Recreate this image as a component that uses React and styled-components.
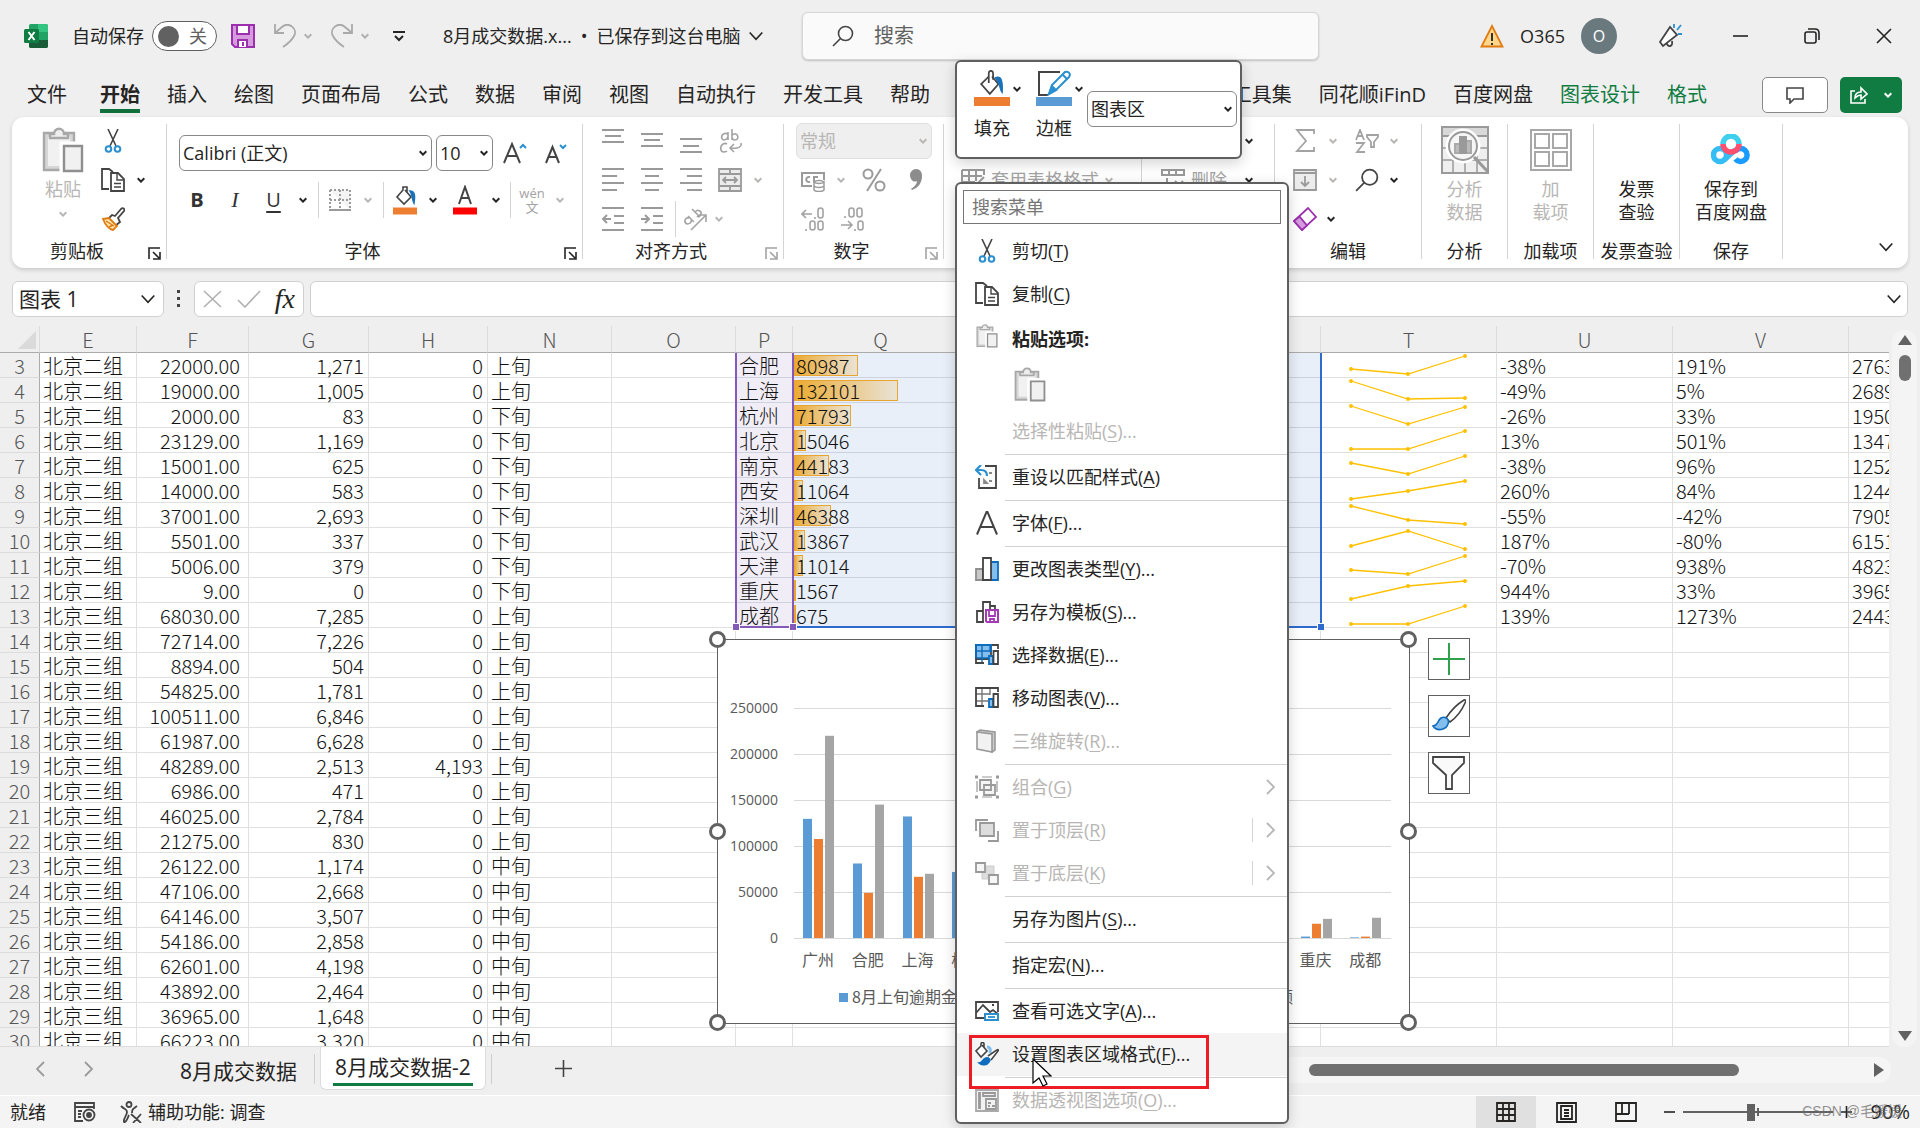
import styled, { createGlobalStyle, css } from 'styled-components';

const uiFont = '"Open Sans", "Noto Sans CJK SC", sans-serif';
const cellFont = '"Noto Sans CJK SC", "Open Sans", sans-serif';

const ink = '#252423';
const dim = '#b8b6b4';
const green = '#107c41';

const GlobalStyle = createGlobalStyle`
    * {
        box-sizing: border-box;
    }
    body {
        margin: 0;
        overflow: hidden;
        background: #efefef;
    }
    button, input, select {
        margin: 0;
        padding: 0;
        border: none;
        background: none;
        color: inherit;
        font: inherit;
    }
    svg {
        display: block;
        flex: none;
    }
`;

/* ---------- data ---------- */

const leftTabs = ['文件', '开始', '插入', '绘图', '页面布局', '公式', '数据', '审阅', '视图', '自动执行', '开发工具', '帮助'];
const rightTabs = ['工具集', '同花顺iFinD', '百度网盘', '图表设计', '格式'];

const columns = [
    ['E', 97], ['F', 112], ['G', 120], ['H', 119], ['N', 124], ['O', 124], ['P', 57],
    ['Q', 176], ['R', 176], ['S', 176], ['T', 176], ['U', 176], ['V', 176], ['W', 176],
];

const rows = [
    ['二', '22000.00', '1,271', '0', '上'],
    ['二', '19000.00', '1,005', '0', '上'],
    ['二', '2000.00', '83', '0', '下'],
    ['二', '23129.00', '1,169', '0', '下'],
    ['二', '15001.00', '625', '0', '下'],
    ['二', '14000.00', '583', '0', '下'],
    ['二', '37001.00', '2,693', '0', '下'],
    ['二', '5501.00', '337', '0', '下'],
    ['二', '5006.00', '379', '0', '下'],
    ['二', '9.00', '0', '0', '下'],
    ['三', '68030.00', '7,285', '0', '上'],
    ['三', '72714.00', '7,226', '0', '上'],
    ['三', '8894.00', '504', '0', '上'],
    ['三', '54825.00', '1,781', '0', '上'],
    ['三', '100511.00', '6,846', '0', '上'],
    ['三', '61987.00', '6,628', '0', '上'],
    ['三', '48289.00', '2,513', '4,193', '上'],
    ['三', '6986.00', '471', '0', '上'],
    ['三', '46025.00', '2,784', '0', '上'],
    ['三', '21275.00', '830', '0', '上'],
    ['三', '26122.00', '1,174', '0', '中'],
    ['三', '47106.00', '2,668', '0', '中'],
    ['三', '64146.00', '3,507', '0', '中'],
    ['三', '54186.00', '2,858', '0', '中'],
    ['三', '62601.00', '4,198', '0', '中'],
    ['三', '43892.00', '2,464', '0', '中'],
    ['三', '36965.00', '1,648', '0', '中'],
    ['三', '66223.00', '3,320', '0', '中'],
];

const cities = [
    { name: '合肥', total: 80987, u: '-38%', v: '191%', w: '2763', line: [16, 21, 3] },
    { name: '上海', total: 132101, u: '-49%', v: '5%', w: '2689', line: [3, 21, 20] },
    { name: '杭州', total: 71793, u: '-26%', v: '33%', w: '1950', line: [3, 21, 4] },
    { name: '北京', total: 15046, u: '13%', v: '501%', w: '1347', line: [21, 21, 3] },
    { name: '南京', total: 44183, u: '-38%', v: '96%', w: '1252', line: [10, 21, 3] },
    { name: '西安', total: 11064, u: '260%', v: '84%', w: '1244', line: [21, 13, 3] },
    { name: '深圳', total: 46388, u: '-55%', v: '-42%', w: '7905', line: [3, 17, 21] },
    { name: '武汉', total: 13867, u: '187%', v: '-80%', w: '6151', line: [18, 3, 21] },
    { name: '天津', total: 11014, u: '-70%', v: '938%', w: '4823', line: [17, 21, 3] },
    { name: '重庆', total: 1567, u: '944%', v: '33%', w: '3965', line: [21, 8, 3] },
    { name: '成都', total: 675, u: '139%', v: '1273%', w: '2443', line: [21, 21, 3] },
];

const chartData = [
    ['广州', 129500, 107600, 219800],
    ['合肥', 80987, 49000, 145000],
    ['上海', 132101, 66500, 69800],
    ['杭州', 71793, 53000, 70800],
    ['北京', 15046, 17000, 102000],
    ['南京', 44183, 27400, 53700],
    ['西安', 11064, 39800, 73300],
    ['深圳', 46388, 20900, 12100],
    ['武汉', 13867, 39800, 8000],
    ['天津', 11014, 3300, 34300],
    ['重庆', 1567, 15500, 20800],
    ['成都', 675, 1500, 22000],
];
const seriesColors = ['#5b9bd5', '#ed7d31', '#a5a5a5'];
const legend = ['8月上旬逾期金额', '8月中旬逾期金额', '8月下旬逾期金额'];

const menu = [
    { icon: 'cut', text: '剪切', k: 'T' },
    { icon: 'copy', text: '复制', k: 'C' },
    { icon: 'paste', heading: '粘贴选项:' },
    { text: '选择性粘贴', k: 'S', dots: true, off: true },
    { sep: true },
    { icon: 'reset', text: '重设以匹配样式', k: 'A' },
    { sep: true },
    { icon: 'font', text: '字体', k: 'F', dots: true },
    { sep: true },
    { icon: 'chartType', text: '更改图表类型', k: 'Y', dots: true },
    { icon: 'template', text: '另存为模板', k: 'S', dots: true },
    { icon: 'selectData', text: '选择数据', k: 'E', dots: true },
    { icon: 'moveChart', text: '移动图表', k: 'V', dots: true },
    { icon: 'rotate', text: '三维旋转', k: 'R', dots: true, off: true },
    { sep: true },
    { icon: 'group', text: '组合', k: 'G', off: true, sub: true },
    { icon: 'front', text: '置于顶层', k: 'R', off: true, sub: true, split: true },
    { icon: 'back', text: '置于底层', k: 'K', off: true, sub: true, split: true },
    { sep: true },
    { text: '另存为图片', k: 'S', dots: true },
    { sep: true },
    { text: '指定宏', k: 'N', dots: true },
    { sep: true },
    { icon: 'altText', text: '查看可选文字', k: 'A', dots: true },
    { icon: 'format', text: '设置图表区域格式', k: 'F', dots: true, hover: true },
    { sep: true },
    { icon: 'pivot', text: '数据透视图选项', k: 'O', dots: true, off: true },
];

/* ---------- icons ---------- */

const Svg = ({ w = 24, h = w, box, sw = 2, color = '#444', children }) => (
    <svg
        width={w}
        height={h}
        viewBox={box || `0 0 ${w} ${h}`}
        fill="none"
        stroke={color}
        strokeWidth={sw}
        aria-hidden="true"
    >
        {children}
    </svg>
);

const Caret = ({ color = ink }) => (
    <Svg w={8} h={6} color={color}>
        <path d="M.7 1.2 4 4.6l3.3-3.4" />
    </Svg>
);

const BigCaret = () => (
    <Svg w={14} h={10} sw={1.6} color={ink}>
        <path d="M.7 1.5 7 8.3l6.300-6.800" />
    </Svg>
);

const LinesIcon = ({ lines, children }) => (
    <Svg color="#9a9a9a" w={24}>
        {lines.map(([y, x1, x2]) => <path key={y} d={`M${x1} ${y}H${x2}`} />)}
        {children}
    </Svg>
);

const PasteIcon = ({ w = 24, h = 24 }) => (
    <Svg w={w} h={h} box="0 0 42 46" sw={2.4} color="#a8a8a8">
        <path d="M2 6h30v37H2z" fill="#d6d6d6" />
        <path d="M6 10h22v29H6z" fill="#f1f1f1" stroke="none" />
        <path d="M8 11V7h4c0-7 10-7 10 0h4v4z" fill="#eee" />
        <path d="M20 17h21v28H20z" fill="#fff" stroke="#fff" strokeWidth="5" />
        <path d="M22 19h18v25H22z" fill="#f1f1f1" stroke="#8f8f8f" />
    </Svg>
);

const CutIcon = () => (
    <Svg sw={1.6}>
        <path d="M7 0l8 17M17 0L9 17" />
        <circle cx="7.5" cy="20" r="2.8" stroke="#2b8fd0" strokeWidth="2" />
        <circle cx="16.5" cy="20" r="2.8" stroke="#2b8fd0" strokeWidth="2" />
    </Svg>
);

const CopyIcon = () => (
    <Svg sw={1.8}>
        <path d="M8 21H1V1h7l4 3" fill="#fff" />
        <path d="M10 5h7l6 6v12H10z" fill="#fff" />
        <path d="M16 5v7h7M13 15.500h7M13 19h7" strokeWidth="1.4" />
    </Svg>
);

const BucketIcon = ({ w = 24 }) => (
    <Svg w={w} box="0 0 24 24" sw={1.6}>
        <path d="M12 6l6 7-8 9-8-9 7-7" fill="#fff" />
        <path d="M9 12V3c0-3 4-3 4 0v6" />
        <path d="M15 7c6-2 7 3 6.500 14-2-2-2-5-3-8-1-2-2-4-3.500-6z" fill="#1a72b8" stroke="#1a72b8" strokeWidth="1" />
    </Svg>
);

const BrushIcon = () => (
    <Svg sw={1.8}>
        <path d="M14 9l6-7c2-2 4 0 3 2l-6 7 2 4-5 4-7-7 4-4z" fill="#fff" />
        <path d="M2 12l6-1 8 8-4 4C7 22 4 17 2 12z" fill="#ffe2ae" stroke="#e07b12" />
        <path d="M5 14l8 5M8 20l4-2" stroke="#e07b12" strokeWidth="1.4" />
    </Svg>
);

const FloppyIcon = () => (
    <Svg color="#9b2fae">
        <path d="M1 1h22v22H4l-3-3z" fill="#d69ade" />
        <path d="M6 1h12v9H6zM7 23v-7h9v7" fill="#fff" />
        <path d="M12 18v4" />
    </Svg>
);

const ExcelIcon = () => (
    <Svg w={24} sw={0}>
        <rect x="5" width="19" height="24" rx="1.5" fill="#21a366" />
        <path d="M14 0h8.500L24 1.500V8H14z" fill="#33c481" />
        <path d="M5 8h9v8H5z" fill="#107c41" />
        <path d="M14 16h10v6.500L22.500 24H6.500L5 22.500V16z" fill="#185c37" />
        <rect y="5" width="15" height="14" rx="1.5" fill="#107c41" />
        <path d="M4.500 8l6 8M10.500 8l-6 8" stroke="#fff" strokeWidth="2" />
    </Svg>
);

const UndoIcon = ({ flip }) => (
    <Svg w={22} h={24} color="#a9a9a9" sw={1.8}>
        <g transform={flip ? 'translate(22 0) scale(-1 1)' : undefined}>
            <path d="M1 0v9h9M1.500 8.500L8 3c7-6 16 2 12 9-1 2-5 7-11 11" />
        </g>
    </Svg>
);

const SearchIcon = ({ w = 22 }) => (
    <Svg w={w} box="0 0 22 22" sw={1.6}>
        <circle cx="13.5" cy="8.5" r="7" />
        <path d="M8.500 13.500L1 21" />
    </Svg>
);

const SheetIcon = ({ blue }) => (
    <Svg sw={1.8}>
        {blue && <path d="M1 2h15v14H1z" fill="#83beec" />}
        <path d="M1 8h14M1 15h12M7 2v18M15 2v7" stroke={blue ? '#0f6cbd' : '#777'} strokeWidth="1.4" />
        <path d="M23 6V2H1v18h8" />
        {blue && <path d="M1 15V2h15v7" stroke="#0f6cbd" />}
        <path d="M14 13h4v8h-4z" fill="#83beec" stroke="#0f6cbd" />
        <path d="M18.500 8H23v13h-4.500z" fill="#fff" />
    </Svg>
);

const icons = {
    cut: <CutIcon />,
    copy: <CopyIcon />,
    paste: <PasteIcon />,
    reset: (
        <Svg sw={1.8}>
            <path d="M10 1h12v22H4V12" fill="#fafafa" stroke="none" />
            <path d="M10 1h11v22H4V13" />
            <path d="M14 8h3M14 16h3M9 15v3h3z" stroke="#888" />
            <path d="M6 0L1 5l5 5M1 5h5c4 0 6 2 6 6" stroke="#2b8fd0" strokeWidth="2.2" />
        </Svg>
    ),
    font: <Svg><path d="M2 23.500L11.500 1h1L22 23.500M5.500 16h13" /></Svg>,
    chartType: (
        <Svg sw={1.8}>
            <path d="M1 12h7v11H1z" fill="#c8c8c8" stroke="#8f8f8f" />
            <path d="M16 5h7v18h-7z" fill="#83beec" stroke="#0f6cbd" />
            <path d="M8 1h8v22H8z" fill="#fff" />
        </Svg>
    ),
    template: (
        <Svg sw={1.8}>
            <path d="M9 22H2V11h6M8 22V2h7v7M15 6h5v3" />
            <path d="M11 10h12v12H12l-1-1z" fill="#fff" stroke="#a43bb5" strokeWidth="2" />
            <path d="M14 10v6h6v-6M15 22v-3h4v3" stroke="#a43bb5" />
        </Svg>
    ),
    selectData: <SheetIcon blue />,
    moveChart: <SheetIcon />,
    rotate: (
        <Svg color="#999" sw={1.6}>
            <path d="M2 3l3-2 15 2v18l-3 2z" fill="#ccc" />
            <path d="M2 3l15 2v18L2 20z" fill="#f2f2f2" />
        </Svg>
    ),
    group: (
        <Svg color="#999" sw={1.8}>
            <path d="M5 5h11v10H5zM9 10h11v10H9z" fill="#eee" fillOpacity=".6" />
            <path d="M0 2h3M21 2h3M0 22h3M21 22h3" strokeWidth="3" />
            <path d="M7 2h10M7 22h10M2 6v11M22 6v11" strokeWidth="1.2" />
        </Svg>
    ),
    front: (
        <Svg color="#999" sw={1.8}>
            <path d="M12 3V2H1v10h1M23 13v10H13" />
            <path d="M5 5h14v13H5z" fill="#ddd" />
        </Svg>
    ),
    back: (
        <Svg color="#999" sw={1.8}>
            <path d="M11 5h8v8h-6v5H7v-7h4z" fill="#ddd" stroke="#ccc" strokeWidth="1" />
            <path d="M1 2h9v9H1zM14 14h9v9h-9z" fill="#f6f6f6" />
        </Svg>
    ),
    altText: (
        <Svg sw={1.8}>
            <path d="M9 19H1V3h22v10" />
            <path d="M1 14l7-8 7 7 3-2 5 4M17 6h2" />
            <path d="M10 15h13v6H10z" fill="#fff" stroke="#2b8fd0" strokeWidth="2" />
            <path d="M13 18h7" stroke="#2b8fd0" />
        </Svg>
    ),
    format: (
        <Svg sw={1.6}>
            <path d="M7 3l5 6-6 6-5-6 5-5V2c0-2 3-2 3 0v4" fill="#fff" />
            <path d="M12 5c3 0 4 2 3 6" stroke="#83beec" strokeWidth="3" />
            <path d="M13 14L22 8c1-1 2 0 1 1l-7 9" fill="#fff" />
            <path d="M4 21c4 0 3-4 7-5 3-.500 5 2 3 4-2 3-7 4-10 1z" fill="#0f6cbd" stroke="#0f6cbd" />
        </Svg>
    ),
    pivot: (
        <Svg color="#999" sw={1.8}>
            <path d="M1 2h22v21H1z" fill="#f1f1f1" stroke="#aaa" />
            <path d="M8 5h12v3H8zM4 5h1v15H4zM11 11h10v10H11z" />
            <path d="M13 15h3M17 18h3M13 18h2" />
        </Svg>
    ),
};

/* ---------- shell ---------- */

const Window = styled.div`
    position: relative;
    display: flex;
    flex-direction: column;
    height: 100vh;
    overflow: hidden;
    background: #efefef;
    color: ${ink};
    font: 18px/24px ${uiFont};
    white-space: nowrap;
`;

const TitleBar = styled.header`
    display: grid;
    grid-template-columns: 802fr 517fr 601fr;
    align-items: center;
    height: 72px;
`;

const TitleGroup = styled.div`
    display: flex;
    align-items: center;
    gap: ${({ $gap }) => $gap}px;
    padding-left: ${({ $pad }) => $pad || 0}px;
    padding-right: ${({ $end }) => $end || 0}px;
    justify-content: ${({ $end }) => ($end ? 'flex-end' : 'flex-start')};
`;

const Toggle = styled.label`
    display: flex;
    align-items: center;
    justify-content: space-between;
    width: 65px;
    height: 30px;
    padding: 0 9px 0 5px;
    border: 1px solid #616161;
    border-radius: 15px;
    background: #fff;
    color: #616161;
    input {
        width: 21px;
        height: 21px;
        border-radius: 50%;
        appearance: none;
        background: #616161;
    }
`;

const PlainButton = styled.button`
    display: flex;
    align-items: center;
    gap: 8px;
    white-space: nowrap;
`;

const SearchBox = styled.label`
    display: flex;
    align-items: center;
    gap: 20px;
    height: 48px;
    padding-left: 29px;
    border: 1px solid #d6d6d6;
    border-radius: 6px;
    background: #fafafa;
    box-shadow: 0 1px 2px rgba(0, 0, 0, .2);
    font-size: 20px;
    input {
        flex: 1;
        outline: none;
    }
    input::placeholder {
        color: #616161;
    }
`;

const Avatar = styled.button`
    width: 36px;
    height: 36px;
    border-radius: 50%;
    background: #69797e;
    color: #fff;
    font-size: 16px;
`;

const WindowControls = styled.div`
    display: flex;
    gap: 56px;
    margin-left: 10px;
    align-items: center;
`;

const TabBar = styled.nav`
    display: flex;
    align-items: center;
    height: 45px;
    padding: 0 18px 0 27px;
    font-size: 20px;
`;

const Tab = styled.button`
    height: 36px;
    margin-right: 27px;
    padding-top: 4px;
    border-bottom: 4px solid ${({ $active }) => ($active ? '#0f703b' : 'transparent')};
    color: ${({ $accent }) => ($accent ? green : ink)};
    font-weight: ${({ $active }) => ($active ? 700 : 400)};
    line-height: 24px;
    white-space: nowrap;
    &:first-child {
        margin-right: 33px;
    }
`;

const TabSpace = styled.div`
    flex: 1;
`;

const CommentButton = styled.button`
    display: flex;
    align-items: center;
    justify-content: center;
    width: 66px;
    height: 36px;
    margin: 0 12px 0 28px;
    border: 1px solid #8a8886;
    border-radius: 5px;
    background: #fff;
`;

const ShareButton = styled.button`
    display: flex;
    align-items: center;
    justify-content: center;
    gap: 16px;
    width: 62px;
    height: 36px;
    border-radius: 5px;
    background: ${green};
`;

/* ---------- ribbon ---------- */

const RibbonCard = styled.section`
    display: flex;
    height: 151px;
    margin: 0 12px;
    border-radius: 12px;
    background: #fff;
    box-shadow: 0 2px 4px rgba(0, 0, 0, .16);
`;

const GroupBox = styled.div`
    display: flex;
    flex: none;
    flex-direction: column;
    width: ${({ $w }) => $w}px;
    padding-top: 4px;
`;

const GroupLine = styled.div`
    width: 1px;
    height: 135px;
    margin-top: 7px;
    background: #d4d4d4;
`;

const GroupBody = styled.div`
    height: 117px;
    padding-left: ${({ $pad }) => $pad || 0}px;
`;

const GroupFoot = styled.div`
    display: flex;
    align-items: center;
    height: 26px;
    text-align: center;
    span {
        flex: 1;
    }
`;

const Launcher = styled.button`
    display: flex;
    width: 24px;
    padding: 4px 0 0 6px;
`;

const ToolRow = styled.div`
    display: flex;
    align-items: center;
    height: ${({ $h }) => $h || 39}px;
    justify-content: ${({ $end }) => ($end ? 'flex-end' : 'flex-start')};
    padding-right: ${({ $end }) => $end || 0}px;
`;

const Tool = styled.button`
    display: flex;
    align-items: center;
    justify-content: center;
    width: ${({ $w }) => $w || 34}px;
    height: 28px;
    color: ${({ disabled }) => (disabled ? '#a3a3a3' : '#333')};
`;

const Letter = styled.span`
    font-size: ${({ $size }) => $size || 20}px;
    font-weight: ${({ $bold }) => ($bold ? 700 : 400)};
    font-style: ${({ $italic }) => ($italic ? 'italic' : 'normal')};
    font-family: ${({ $serif }) => ($serif ? '"Liberation Serif", serif' : uiFont)};
    text-decoration: ${({ $under }) => ($under ? 'underline' : 'none')};
    text-underline-offset: 4px;
    line-height: 24px;
`;

const Pinyin = styled.span`
    font-size: 13px;
    line-height: 14px;
`;

const ToolLine = styled.div`
    width: 1px;
    height: 36px;
    margin: 0 4px;
    background: #d4d4d4;
`;

const SelectShell = styled.label`
    display: grid;
    align-items: center;
    width: ${({ $w }) => $w}px;
    height: 36px;
    margin-right: 4px;
    border: 1px solid ${({ $off }) => ($off ? '#e0e0e0' : '#8a8886')};
    border-radius: 6px;
    background: ${({ $off }) => ($off ? '#efefef' : '#fff')};
    color: ${({ $off }) => ($off ? dim : ink)};
    > * {
        grid-area: 1 / 1;
    }
    select {
        height: 100%;
        padding-left: 3px;
        opacity: 1;
        outline: none;
        appearance: none;
    }
    svg {
        justify-self: end;
        margin-right: 4px;
        pointer-events: none;
    }
`;

const ClipLayout = styled.div`
    display: grid;
    grid-template-columns: 54px 56px;
`;

const BigTool = styled.button`
    display: flex;
    flex-direction: column;
    align-items: center;
    width: 100%;
    padding-top: 5px;
    color: ${({ disabled }) => (disabled ? dim : ink)};
    line-height: 23px;
    > div {
        display: grid;
        place-items: center;
        height: 48px;
        margin-bottom: 4px;
    }
    > svg {
        margin-top: 10px;
    }
`;

const RibbonEnd = styled.div`
    display: flex;
    flex: 1;
    align-items: flex-end;
    justify-content: flex-end;
    padding: 0 15px 16px 0;
`;

/* ---------- formula bar ---------- */

const FormulaBar = styled.div`
    display: flex;
    align-items: center;
    height: 58px;
    padding: 3px 12px 0;
`;

const NameBox = styled.label`
    display: flex;
    align-items: center;
    width: 152px;
    height: 36px;
    padding: 0 8px 0 6px;
    border: 1px solid #d0d0d0;
    border-radius: 6px;
    background: #fff;
    font-size: 21px;
    input {
        width: 100%;
        outline: none;
    }
`;

const FormulaTools = styled.div`
    display: flex;
    align-items: center;
    justify-content: space-between;
    width: 110px;
    height: 36px;
    padding: 0 8px;
    border: 1px solid #d0d0d0;
    border-radius: 6px;
    background: #fff;
`;

const Dots = styled.div`
    display: grid;
    place-items: center;
    width: 30px;
`;

const FormulaInput = styled.label`
    display: flex;
    flex: 1;
    align-items: center;
    height: 36px;
    margin-left: 6px;
    padding: 0 6px;
    border: 1px solid #d0d0d0;
    border-radius: 6px;
    background: #fff;
    input {
        flex: 1;
        outline: none;
    }
`;

/* ---------- sheet ---------- */

const SheetArea = styled.main`
    display: flex;
    flex: 1;
    min-height: 0;
`;

const Canvas = styled.div`
    position: relative;
    flex: 1;
    min-width: 0;
    overflow: hidden;
    border-bottom: 1px solid #dcdcdc;
    background: #fff;
`;

const Grid = styled.table`
    width: 2025px;
    border-collapse: separate;
    border-spacing: 0;
    table-layout: fixed;
    font: 20px/22px ${cellFont};
    color: #111;
    th {
        padding: 0;
        background: #efefef;
        color: #555;
        font-weight: 300;
        text-align: center;
    }
    thead th {
        height: 27px;
        padding-top: 2px;
        border-right: 1px solid #dcdcdc;
        border-bottom: 1px solid #ababab;
    }
    tbody th {
        height: 25px;
        padding-top: 2px;
        border-right: 1px solid #ababab;
        border-bottom: 1px solid #dcdcdc;
    }
`;

const Corner = styled.th`
    svg {
        margin: 0 3px 0 auto;
    }
`;

const Cell = styled.td`
    height: 25px;
    padding: ${({ $spark }) => ($spark ? 0 : '2px 4px 0 3px')};
    padding-right: ${({ $wide }) => ($wide ? 8 : 4)}px;
    border-right: 1px solid ${({ $fill }) => ($fill ? 'transparent' : '#e0e0e0')};
    border-bottom: 1px solid ${({ $fill }) => ($fill ? '#cdd2de' : '#e0e0e0')};
    background: ${({ $fill }) => $fill || '#fff'};
    background-clip: padding-box;
    font-weight: 300;
    text-align: ${({ $right }) => ($right ? 'right' : 'left')};
`;

const BarCell = styled(Cell)`
    padding: 0;
`;

const BarStack = styled.div`
    display: grid;
    align-items: center;
    height: 24px;
    padding-left: 1px;
    > * {
        grid-area: 1 / 1;
    }
    span {
        padding: 2px 0 0 2px;
    }
`;

const Bar = styled.div`
    height: 21px;
    border: 1px solid #e8a530;
    background: linear-gradient(90deg, #ecab33, #e9e3d6);
`;

const RangeFrame = styled.div`
    position: absolute;
    top: 27px;
    left: ${({ $left }) => $left}px;
    width: ${({ $w }) => $w}px;
    height: 275px;
    border: solid ${({ $color }) => $color};
    border-width: 0 2px 2px ${({ $open }) => ($open ? 0 : 2)}px;
`;

const RangeKnob = styled.div`
    position: absolute;
    top: 298px;
    left: ${({ $left }) => $left}px;
    width: 6px;
    height: 6px;
    background: ${({ $color }) => $color};
    outline: 1px solid #fff;
`;

const ChartBox = styled.figure`
    position: absolute;
    top: 313px;
    left: 717px;
    width: 693px;
    height: 385px;
    margin: 0;
    border: 1px solid #616161;
    background: #fff;
    text {
        fill: #595959;
        stroke: none;
        font: 14px "Open Sans", "Noto Sans CJK SC", sans-serif;
    }
    text.cn {
        font: 16px "Noto Sans CJK SC", sans-serif;
    }
`;

const ChartKnob = styled.div`
    position: absolute;
    top: ${({ $y }) => $y};
    left: ${({ $x }) => $x};
    width: 17px;
    height: 17px;
    margin: -9px;
    border: 3px solid #616161;
    border-radius: 50%;
    background: #fff;
`;

const ChartSide = styled.div`
    position: absolute;
    top: 312px;
    left: 1428px;
    display: flex;
    flex-direction: column;
    gap: 15px;
`;

const SideButton = styled.button`
    display: grid;
    place-items: center;
    width: 42px;
    height: 42px;
    border: 1px solid #616161;
    background: #fff;
`;

const VScroll = styled.div`
    display: flex;
    flex-direction: column;
    align-items: center;
    width: 25px;
    margin: 4px 3px 0;
    padding: 5px 0 6px;
    border-radius: 12px;
    background: #f4f4f4;
`;

const VThumb = styled.div`
    width: 12px;
    height: 26px;
    margin: 10px 0 auto;
    border-radius: 6px;
    background: #707070;
`;

/* ---------- bottom bars ---------- */

const SheetTabs = styled.nav`
    display: flex;
    align-items: center;
    height: 48px;
    padding-bottom: 5px;
    font-size: 21px;
`;

const NavArrow = styled.button`
    width: 48px;
    display: grid;
    place-items: center;
`;

const SheetTab = styled.button`
    height: 43px;
    white-space: nowrap;
    ${({ $active }) => $active ? css`
        padding: 0 12px;
        border: 1px solid #dcdcdc;
        border-top: none;
        border-radius: 0 0 6px 6px;
        background: #fff;
        span {
            display: block;
            padding: 0 2px;
            border-bottom: 3px solid ${green};
            line-height: 32px;
        }
    ` : css`
        margin-left: 68px;
        padding: 4px 12px 0 0;
    `}
`;

const TabLine = styled.div`
    width: 1px;
    height: 30px;
    margin: 0 5px;
    background: #cfcfcf;
`;

const HScroll = styled.div`
    display: flex;
    align-items: center;
    flex: 0 0 630px;
    height: 26px;
    margin: 2px 29px 0 auto;
    padding: 0 7px 0 48px;
    border-radius: 12px;
    background: #f5f5f5;
`;

const HThumb = styled.div`
    width: 430px;
    height: 12px;
    margin-right: auto;
    border-radius: 6px;
    background: #707070;
`;

const StatusBar = styled.footer`
    display: flex;
    align-items: center;
    height: 33px;
    border-top: 1px solid #fff;
    background: #f4f4f4;
    padding: 0 10px;
    gap: 28px;
    > :nth-child(3) {
        margin-left: -4px;
        gap: 6px;
    }
`;

const StatusRight = styled.div`
    display: flex;
    align-items: center;
    height: 100%;
    margin-left: auto;
`;

const ViewButton = styled.button`
    display: grid;
    place-items: center;
    width: 60px;
    height: 100%;
    background: ${({ $active }) => ($active ? '#e0e0e0' : 'none')};
`;

const ZoomRange = styled.input`
    width: 150px;
    height: 18px;
    margin: 0 8px;
    appearance: none;
    background: linear-gradient(#616161, #616161) center / 100% 2px no-repeat,
        linear-gradient(#616161, #616161) center / 2px 8px no-repeat;
    &::-webkit-slider-thumb {
        width: 8px;
        height: 17px;
        appearance: none;
        background: #616161;
    }
`;

const ZoomValue = styled.span`
    width: 58px;
    font-size: 20px;
    text-align: right;
`;

const Watermark = styled.div`
    position: absolute;
    right: 18px;
    bottom: 5px;
    color: rgba(110, 110, 110, .75);
    font: 14px/24px "Liberation Sans", "Noto Sans CJK SC", sans-serif;
`;

/* ---------- floating layers ---------- */

const floating = css`
    position: absolute;
    left: 955px;
    border: 2px solid #5f5f5f;
    border-radius: 6px;
    background: #fff;
    box-shadow: 0 4px 14px rgba(0, 0, 0, .18);
`;

const MiniToolbar = styled.div`
    ${floating}
    top: 60px;
    display: flex;
    width: 287px;
    height: 99px;
    padding: 6px 0 0 14px;
`;

const MiniTool = styled.button`
    display: grid;
    grid-template-columns: 42px 20px;
    grid-template-rows: 29px 9px 44px;
    width: 62px;
    height: 82px;
    align-items: center;
    justify-items: center;
    > svg + svg {
        align-self: end;
        justify-self: start;
        margin-bottom: 5px;
    }
`;

const ColorBar = styled.div`
    grid-column: 1;
    width: 36px;
    height: 9px;
    background: ${({ $color }) => $color};
`;

const MiniLabel = styled.span`
    grid-column: 1;
`;

const MiniSelect = styled.div`
    padding-top: 23px;
    margin-left: -8px;
`;

const ContextMenu = styled.div`
    ${floating}
    top: 182px;
    width: 334px;
    padding-top: 6px;
`;

const MenuSearch = styled.input`
    display: block;
    width: 318px;
    height: 34px;
    margin: 0 6px 6px;
    padding: 0 0 1px 8px;
    border: 1px solid #767676;
    outline: none;
    &::placeholder {
        color: #767676;
    }
`;

const MenuItem = styled.button`
    display: grid;
    grid-template-columns: 24px 1fr auto 12px;
    align-items: center;
    gap: 13px;
    width: 100%;
    height: 43px;
    padding: 0 9px 2px 18px;
    background: ${({ $hover }) => ($hover ? '#f4f4f4' : 'none')};
    color: ${({ disabled }) => (disabled ? dim : ink)};
    text-align: left;
    u {
        text-underline-offset: 3px;
    }
`;

const MenuHeading = styled.div`
    display: grid;
    grid-template-columns: 24px 1fr;
    gap: 13px;
    height: 46px;
    padding: 8px 0 0 18px;
    font-weight: 700;
    > span {
        padding-top: 3px;
    }
`;

const PasteOption = styled.button`
    display: grid;
    place-items: start center;
    width: 48px;
    height: 48px;
    margin-left: 49px;
    padding-top: 5px;
`;

const MenuLine = styled.div`
    height: 1px;
    margin: 1px 0 1px 48px;
    background: #d1d1d1;
`;

const SplitLine = styled.i`
    grid-column: 3;
    width: 1px;
    height: 24px;
    background: #d4d4d4;
`;

const SubArrow = styled.span`
    grid-column: 4;
`;

const RedFrame = styled.div`
    position: absolute;
    top: 1035px;
    left: 969px;
    width: 240px;
    height: 54px;
    border: 3px solid #ed1c24;
`;

const Pointer = styled.div`
    position: absolute;
    top: 1058px;
    left: 1032px;
`;

/* ---------- components ---------- */

const RibbonGroup = ({ name, width, pad, launcher, children }) => (
    <>
        <GroupBox $w={width}>
            <GroupBody $pad={pad}>{children}</GroupBody>
            <GroupFoot>
                <span>{name}</span>
                {launcher && (
                    <Launcher aria-label={`${name}设置`}>
                        <Svg w={13} color={launcher} sw={1.6}>
                            <path d="M1 12V1h11M5 5l6 6M12 5v7H5" />
                        </Svg>
                    </Launcher>
                )}
            </GroupFoot>
        </GroupBox>
        <GroupLine />
    </>
);

const Drop = ({ off, w = 22 }) => (
    <Tool $w={w} disabled={off} aria-label="更多选项">
        <Caret color={off ? dim : ink} />
    </Tool>
);

const Select = ({ label, value, off, ...box }) => (
    <SelectShell $off={off} {...box}>
        <select aria-label={label} disabled={off}>
            <option>{value}</option>
        </select>
        <Caret color={off ? dim : ink} />
    </SelectShell>
);

const Title = () => (
    <TitleBar>
        <TitleGroup $gap={24} $pad={24}>
            <ExcelIcon />
            <TitleGroup $gap={14}>
                <TitleGroup $gap={8}>
                    <span>自动保存</span>
                    <Toggle>
                        <input type="checkbox" aria-label="自动保存" />
                        关
                    </Toggle>
                </TitleGroup>
                <TitleGroup $gap={19}>
                    <PlainButton aria-label="保存"><FloppyIcon /></PlainButton>
                    <PlainButton aria-label="撤消"><UndoIcon /><Caret color="#b0b0b0" /></PlainButton>
                    <PlainButton aria-label="恢复"><UndoIcon flip /><Caret color="#b0b0b0" /></PlainButton>
                </TitleGroup>
            </TitleGroup>
            <PlainButton aria-label="自定义快速访问工具栏">
                <Svg w={12} h={11} color={ink}><path d="M0 1h12M2 5l4 4 4-4" /></Svg>
            </PlainButton>
            <TitleGroup $gap={9} $pad={14}>
                <span>8月成交数据.x...</span>
                <span>•</span>
                <span>已保存到这台电脑</span>
                <BigCaret />
            </TitleGroup>
        </TitleGroup>
        <SearchBox>
            <SearchIcon />
            <input placeholder="搜索" aria-label="搜索" />
        </SearchBox>
        <TitleGroup $gap={16} $end={28}>
            <Svg w={24} color="#e07b12" sw={1.8}>
                <path d="M12 2l10.500 20.500h-21z" fill="#ffd68a" />
                <path d="M12 9v8M12 19v2" stroke="#333" strokeWidth="2" />
            </Svg>
            <span>O365</span>
            <Avatar>O</Avatar>
            <Tool $w={74} aria-label="新增功能">
                <Svg w={26} sw={1.8}>
                    <path d="M3 19L13 4l7 8L6 23l-3-4zM10 21c2 4 6 2 5-3" fill="#fff" />
                    <path d="M17 5V1M20 7l4-5M21 11h4" stroke="#2b8fd0" />
                </Svg>
            </Tool>
            <WindowControls>
                <Svg w={15} sw={1.6} color={ink}><path d="M0 7h15" /></Svg>
                <Svg w={16} sw={1.6} color={ink}>
                    <rect x="1" y="4" width="11" height="11" rx="2" />
                    <path d="M4 1h7c3 0 4 1 4 4v7" />
                </Svg>
                <Svg w={16} sw={1.6} color={ink}><path d="M1 1l14 14M15 1L1 15" /></Svg>
            </WindowControls>
        </TitleGroup>
    </TitleBar>
);

const Tabs = () => (
    <TabBar>
        {leftTabs.map((t) => <Tab key={t} $active={t === '开始'}>{t}</Tab>)}
        <TabSpace />
        {rightTabs.map((t, i) => <Tab key={t} $accent={i > 2}>{t}</Tab>)}
        <CommentButton aria-label="批注">
            <Svg w={18} sw={1.6}><path d="M1 2h16v11H8l-4 4v-4H1z" /></Svg>
        </CommentButton>
        <ShareButton aria-label="共享">
            <Svg w={18} color="#fff" sw={1.6}>
                <path d="M5 5H1v12h14v-4M5 12c0-5 3-6 6-6V2l6 6-6 5V9c-3 0-4 1-6 3z" />
            </Svg>
            <Caret color="#fff" />
        </ShareButton>
    </TabBar>
);

const Ribbon = () => (
    <RibbonCard>
        <RibbonGroup name="剪贴板" width={154} pad={24} launcher={ink}>
            <ClipLayout>
                <BigTool disabled>
                    <div><PasteIcon w={42} h={46} /></div>
                    粘贴
                    <Caret color={dim} />
                </BigTool>
                <div>
                    <ToolRow><Tool $w={46} aria-label="剪切"><CutIcon /></Tool></ToolRow>
                    <ToolRow><Tool $w={46} aria-label="复制"><CopyIcon /></Tool><Drop w={10} /></ToolRow>
                    <ToolRow><Tool $w={46} aria-label="格式刷"><BrushIcon /></Tool></ToolRow>
                </div>
            </ClipLayout>
        </RibbonGroup>

        <RibbonGroup name="字体" width={415} pad={12} launcher={ink}>
            <ToolRow $h={64}>
                <Select label="字体" value="Calibri (正文)" $w={253} />
                <Select label="字号" value="10" $w={57} />
                <Tool $w={36} aria-label="增大字号">
                    <Svg w={24}><path d="M1 22L9 3l8 19M4 15h10" /><path d="M17 7l3-3 3 3" stroke="#2b8fd0" /></Svg>
                </Tool>
                <Tool $w={44} aria-label="减小字号">
                    <Svg w={24}><path d="M3 22L9.500 6 16 22M5 16h9" /><path d="M17 4l3 3 3-3" stroke="#2b8fd0" /></Svg>
                </Tool>
            </ToolRow>
            <ToolRow $h={30}>
                <Tool $w={36} aria-label="加粗"><Letter $bold>B</Letter></Tool>
                <Tool $w={40} aria-label="倾斜"><Letter $italic $serif $size={22}>I</Letter></Tool>
                <Tool $w={37} aria-label="下划线"><Letter $under>U</Letter></Tool>
                <Drop />
                <ToolLine />
                <Tool disabled aria-label="边框">
                    <Svg w={24} color="#9a9a9a">
                        <path d="M2 2h20v20M2 2v20M12 2v20M2 12h20" strokeDasharray="2 2" fill="#f4f4f4" />
                        <path d="M1 22h22" />
                    </Svg>
                </Tool>
                <Drop off />
                <ToolLine />
                <Tool aria-label="填充颜色">
                    <Svg w={24} h={30} sw={1.6}>
                        <path d="M12 5l6 7-7 7-7-7 6-7V2h4v6" />
                        <path d="M17 6c5 0 5 5 4 12-2-3-1-8-4-12z" fill="#1a72b8" stroke="#1a72b8" />
                        <path d="M0 26h24" stroke="#ed7d31" strokeWidth="7" />
                    </Svg>
                </Tool>
                <Drop />
                <Tool $w={42} aria-label="字体颜色">
                    <Svg w={24} h={30}>
                        <path d="M6 19L12 2l6 17M8 13h8" />
                        <path d="M0 26h24" stroke="#f00" strokeWidth="7" />
                    </Svg>
                </Tool>
                <Drop w={20} />
                <ToolLine />
                <Tool disabled aria-label="拼音">
                    <Pinyin>wén<br />文</Pinyin>
                </Tool>
                <Drop off />
            </ToolRow>
        </RibbonGroup>

        <RibbonGroup name="对齐方式" width={200} pad={10} launcher="#a3a3a3">
            <ToolRow>
                <Tool $w={39} disabled aria-label="顶端对齐"><LinesIcon lines={[[1, 1, 23], [7, 4, 20], [13, 1, 23]]} /></Tool>
                <Tool $w={39} disabled aria-label="垂直居中"><LinesIcon lines={[[5, 1, 23], [11, 4, 20], [17, 1, 23]]} /></Tool>
                <Tool $w={39} disabled aria-label="底端对齐"><LinesIcon lines={[[10, 1, 23], [17, 4, 20], [23, 1, 23]]} /></Tool>
                <Tool $w={39} disabled aria-label="自动换行">
                    <Svg w={24} color="#a3a3a3" sw={1.6}>
                        <path d="M10 3v8M10 5c-7-3-8 6-4 6 2 0 4-2 4-4M14 0v11M14 6c6-4 8 5 3 5-2 0-3-1-3-3M9 15c-5-3-9 6-4 8 2 0 3 0 4-1M23 14c1 4-3 6-10 5M16 15l-4 4 4 4" />
                    </Svg>
                </Tool>
            </ToolRow>
            <ToolRow>
                <Tool $w={39} disabled aria-label="左对齐"><LinesIcon lines={[[1, 1, 23], [8, 1, 16], [15, 1, 23], [22, 1, 16]]} /></Tool>
                <Tool $w={39} disabled aria-label="居中"><LinesIcon lines={[[1, 1, 23], [8, 5, 19], [15, 1, 23], [22, 5, 19]]} /></Tool>
                <Tool $w={39} disabled aria-label="右对齐"><LinesIcon lines={[[1, 1, 23], [8, 8, 23], [15, 1, 23], [22, 8, 23]]} /></Tool>
                <Tool $w={39} disabled aria-label="合并后居中">
                    <Svg w={24} color="#9a9a9a" sw={1.8}>
                        <path d="M1 1h22v22H1z" fill="#ececec" />
                        <path d="M1 6h22M1 18h22M12 1v5M12 18v5M5 12h14M8 9l-3 3 3 3M16 9l3 3-3 3" />
                    </Svg>
                </Tool>
                <Drop off w={18} />
            </ToolRow>
            <ToolRow>
                <Tool $w={39} disabled aria-label="减少缩进">
                    <LinesIcon lines={[[1, 1, 23], [9, 13, 23], [16, 13, 23], [23, 1, 23]]}><path d="M10 12H2M6 8l-4 4 4 4" /></LinesIcon>
                </Tool>
                <Tool $w={39} disabled aria-label="增加缩进">
                    <LinesIcon lines={[[1, 1, 23], [9, 13, 23], [16, 13, 23], [23, 1, 23]]}><path d="M1 12h8M5 8l4 4-4 4" /></LinesIcon>
                </Tool>
                <ToolLine />
                <Tool $w={30} disabled aria-label="方向">
                    <Svg w={24} color="#a3a3a3" sw={1.6}>
                        <path d="M8 23L22 9M16 8h7v7" />
                        <path d="M5 9l6 6M6 11c-5-1-5 5-2 6 3 0 5-2 4-4M9 2l8 8M12 6c1-5 7-2 6 1-1 3-3 3-4 2" />
                    </Svg>
                </Tool>
                <Drop off w={18} />
            </ToolRow>
        </RibbonGroup>

        <RibbonGroup name="数字" width={159} pad={12} launcher="#a3a3a3">
            <ToolRow><Select label="数字格式" value="常规" off $w={136} /></ToolRow>
            <ToolRow>
                <Tool disabled aria-label="会计数字格式">
                    <Svg w={24} color="#9a9a9a">
                        <path d="M11 18H1V5h22v7M9 9c-5-1-5 6 0 5M13 14V9h4" />
                        <path d="M13 14v8c2 2 8 2 10 0v-8c-2 2-8 2-10 0 2-2 8-2 10 0M13 18c2 2 8 2 10 0" fill="#fff" strokeWidth="1.5" />
                    </Svg>
                </Tool>
                <Drop off />
                <Tool $w={44} disabled aria-label="百分比样式">
                    <Svg w={24} color="#9a9a9a">
                        <circle cx="6" cy="6" r="4.5" /><circle cx="18" cy="18" r="4.5" /><path d="M19 1L5 23" />
                    </Svg>
                </Tool>
                <Tool $w={39} disabled aria-label="千位分隔样式">
                    <Svg w={12} h={22} color="none">
                        <path d="M6 0c4 0 6 3 6 7 0 7-4 12-10 14l-1-1c4-3 6-5 6-8C3 14 0 10 0 6c0-3 3-6 6-6z" fill="#8c8c8c" />
                    </Svg>
                </Tool>
            </ToolRow>
            <ToolRow>
                <Tool disabled aria-label="增加小数位数">
                    <Svg w={24} color="#a3a3a3" sw={1.6}>
                        <path d="M11 7H1M5 3L1 7l4 4M14 10v2M5 22v2" />
                        <rect x="17" y="1" width="5" height="10" rx="2.5" /><rect x="9" y="14" width="5" height="9" rx="2.5" /><rect x="17" y="14" width="5" height="9" rx="2.5" />
                    </Svg>
                </Tool>
                <Tool $w={44} disabled aria-label="减少小数位数">
                    <Svg w={24} color="#a3a3a3" sw={1.6}>
                        <path d="M1 18h11M8 14l4 4-4 4M15 22v2M5 9v2" />
                        <rect x="9" y="1" width="5" height="9" rx="2.5" /><rect x="17" y="1" width="5" height="9" rx="2.5" /><rect x="18" y="14" width="5" height="9" rx="2.5" />
                    </Svg>
                </Tool>
            </ToolRow>
        </RibbonGroup>

        <RibbonGroup name="样式" width={197} pad={18}>
            <ToolRow />
            <ToolRow>
                <Tool $w={150} disabled>
                    <TitleGroup $gap={6}>
                        <Svg w={24} color="#9a9a9a">
                            <path d="M1 2h22v5M1 2v18h10M1 8h20M1 14h13M8 2v18M15 2v11" fill="none" />
                            <path d="M12 22l3-5 8-8" />
                        </Svg>
                        套用表格格式
                        <Caret color={dim} />
                    </TitleGroup>
                </Tool>
            </ToolRow>
        </RibbonGroup>

        <RibbonGroup name="单元格" width={132}>
            <ToolRow $end={14}><Drop /></ToolRow>
            <ToolRow $end={14}>
                <Tool $w={68} disabled>
                    <TitleGroup $gap={6}>
                        <Svg w={24} color="#9a9a9a">
                            <path d="M1 2h22v5H1zM8 2v5M15 2v5M6 10v10h4M14 13l8 9M22 13l-8 9" />
                        </Svg>
                        删除
                    </TitleGroup>
                </Tool>
                <ToolRow $end={10} />
                <Drop />
            </ToolRow>
        </RibbonGroup>

        <RibbonGroup name="编辑" width={146} pad={13}>
            <ToolRow>
                <Tool disabled aria-label="自动求和">
                    <Svg w={24} color="#a3a3a3" sw={1.8}><path d="M21 5V1H4l9 11L4 22h17v-4" /></Svg>
                </Tool>
                <Drop off />
                <Tool $w={46} disabled aria-label="排序和筛选">
                    <Svg w={24} color="#a3a3a3" sw={1.8}>
                        <path d="M1 11L5 1l4 10M2 7h6M1 14h8l-7 9h8M12 6h11v2l-4 5v5h-3v-5l-4-5z" />
                    </Svg>
                </Tool>
                <Drop off w={8} />
            </ToolRow>
            <ToolRow>
                <Tool disabled aria-label="填充">
                    <Svg w={24} color="#9a9a9a" sw={1.8}>
                        <path d="M1 2h22v20H1z" fill="#ececec" /><path d="M1 5h22M12 8v10M8 14l4 4 4-4" />
                    </Svg>
                </Tool>
                <Drop off />
                <Tool $w={46} aria-label="查找和选择"><SearchIcon w={24} /></Tool>
                <Drop w={8} />
            </ToolRow>
            <ToolRow>
                <Tool aria-label="清除">
                    <Svg w={24} color="#9b2fae" sw={1.8}>
                        <path d="M15 1l8 9-14 13-8-9z" fill="#fff" />
                        <path d="M6.500 9.500l7.500 9-5 4.500-8-9z" fill="#d69ade" />
                    </Svg>
                </Tool>
                <Drop w={18} />
            </ToolRow>
        </RibbonGroup>

        <RibbonGroup name="分析" width={85}>
            <BigTool disabled>
                <div>
                    <Svg w={48} color="#9a9a9a">
                        <path d="M1 1h46v46H1z" fill="#efefef" />
                        <path d="M1 1h46v9H1z" fill="#d8d8d8" />
                        <path d="M1 22h46M1 34h46M12 34v13M24 34v13M36 10v37" strokeWidth="1.5" />
                        <circle cx="22" cy="20" r="15" fill="#fff" stroke="#fff" strokeWidth="5" />
                        <circle cx="22" cy="20" r="14" fill="#f6f6f6" />
                        <path d="M33 31l14 15" strokeWidth="3" />
                        <path d="M14 18h5v9h-5zM25 15h5v12h-5z" fill="#bbb" stroke="#aaa" />
                        <path d="M19 11h6v16h-6z" fill="#999" />
                    </Svg>
                </div>
                分析<br />数据
            </BigTool>
        </RibbonGroup>
        <RibbonGroup name="加载项" width={85}>
            <BigTool disabled>
                <div>
                    <Svg w={42} color="#a8a8a8">
                        <path d="M1 1h40v40H1zM5 5h14v14H5zM23 5h14v14H23zM5 23h14v14H5zM23 23h14v14H23z" />
                    </Svg>
                </div>
                加<br />载项
            </BigTool>
        </RibbonGroup>
        <RibbonGroup name="发票查验" width={85}>
            <BigTool>
                <div />
                发票<br />查验
            </BigTool>
        </RibbonGroup>
        <RibbonGroup name="保存" width={102}>
            <BigTool>
                <div>
                    <Svg w={40} h={32} sw={5.5}>
                        <circle cx="9" cy="21" r="6.5" stroke="#35bdf5" />
                        <path d="M13 26L24 16" stroke="#35bdf5" />
                        <path d="M24.500 25a6.500 6.500 0 1 0 0-8" stroke="#1a9bff" />
                        <path d="M12 10a8 8 0 0 1 16 0" stroke="#3fd0ee" />
                        <path d="M12 10a8 8 0 0 0 16 0" stroke="#ff4f6e" />
                    </Svg>
                </div>
                保存到<br />百度网盘
            </BigTool>
        </RibbonGroup>
        <RibbonEnd>
            <PlainButton aria-label="折叠功能区"><BigCaret /></PlainButton>
        </RibbonEnd>
    </RibbonCard>
);

const Formula = () => (
    <FormulaBar>
        <NameBox>
            <input defaultValue="图表 1" aria-label="名称框" />
            <BigCaret />
        </NameBox>
        <Dots>
            <Svg w={4} h={18} color="none">
                <path d="M0 0h3v3H0zM0 7h3v3H0zM0 14h3v3H0z" fill="#444" />
            </Svg>
        </Dots>
        <FormulaTools>
            <PlainButton aria-label="取消"><Svg w={20} color="#b0b0b0" sw={1.6}><path d="M1 2l17 16M18 2L1 18" /></Svg></PlainButton>
            <PlainButton aria-label="输入"><Svg w={24} h={18} color="#b0b0b0" sw={1.6}><path d="M1 10l7 7L23 1" /></Svg></PlainButton>
            <PlainButton aria-label="插入函数"><Letter $italic $serif $size={28}>fx</Letter></PlainButton>
        </FormulaTools>
        <FormulaInput>
            <input aria-label="编辑栏" />
            <BigCaret />
        </FormulaInput>
    </FormulaBar>
);

const Sparkline = ({ points: [a, b, c] }) => (
    <Svg w={175} h={24} color="#ffc000" sw={1.3}>
        <path d={`M30 ${a}L87 ${b}L144 ${c}`} />
        {[[30, a], [87, b], [144, c]].map(([x, y]) => (
            <circle key={x} cx={x} cy={y} r="2" fill="#ffc000" stroke="none" />
        ))}
    </Svg>
);

const rangeFill = '#e9eff8';

const SheetRow = ({ index, row, city }) => (
    <tr>
        <th scope="row">{index + 3}</th>
        <Cell>北京{row[0]}组</Cell>
        <Cell $right $wide>{row[1]}</Cell>
        <Cell $right>{row[2]}</Cell>
        <Cell $right>{row[3]}</Cell>
        <Cell>{row[4]}旬</Cell>
        <Cell />
        <Cell $fill={city && '#f1edf7'}>{city?.name}</Cell>
        {city ? (
            <BarCell $fill={rangeFill}>
                <BarStack>
                    <Bar style={{ width: `${Math.max(1, (city.total / 132101) * 60)}%` }} />
                    <span>{city.total}</span>
                </BarStack>
            </BarCell>
        ) : <Cell />}
        <Cell $fill={city && rangeFill} />
        <Cell $fill={city && rangeFill} />
        <Cell $spark={!!city}>{city && <Sparkline points={city.line} />}</Cell>
        <Cell>{city?.u}</Cell>
        <Cell>{city?.v}</Cell>
        <Cell>{city?.w}</Cell>
    </tr>
);

const Chart = () => (
    <ChartBox>
        <Svg w={691} h={383} sw={1} color="#d9d9d9">
            {[0, 1, 2, 3, 4, 5].map((n) => (
                <g key={n}>
                    <path d={`M76 ${298.5 - n * 46}H673`} />
                    <text x="60" y={303 - n * 46} textAnchor="end">{n * 50000}</text>
                </g>
            ))}
            {chartData.map(([name, ...values], i) => (
                <g key={name} stroke="none">
                    {values.map((v, s) => (
                        <rect
                            key={s}
                            x={Math.round(85 + i * 49.75 + s * 11)}
                            y={298 - (v / 250000) * 230}
                            width="9"
                            height={(v / 250000) * 230}
                            fill={seriesColors[s]}
                        />
                    ))}
                    <text className="cn" x={100 + i * 49.75} y="326" textAnchor="middle">{name}</text>
                </g>
            ))}
            {legend.map((text, i) => (
                <g key={text} stroke="none">
                    <rect x={121 + i * 160} y="353" width="9" height="9" fill={seriesColors[i]} />
                    <text className="cn" x={134 + i * 160} y="363">{text}</text>
                </g>
            ))}
        </Svg>
        {['0%', '100%'].flatMap((x) => ['0%', '50%', '100%'].map((y) => (
            <ChartKnob key={x + y} $x={x} $y={y} />
        )))}
    </ChartBox>
);

const Sheet = () => (
    <SheetArea>
        <Canvas>
            <Grid>
                <colgroup>
                    <col width="40" />
                    {columns.map(([name, w]) => <col key={name} width={w} />)}
                </colgroup>
                <thead>
                    <tr>
                        <Corner>
                            <Svg w={18} color="none"><path d="M18 0v18H0z" fill="#dadada" /></Svg>
                        </Corner>
                        {columns.map(([name]) => <th key={name} scope="col">{name}</th>)}
                    </tr>
                </thead>
                <tbody>
                    {rows.map((row, i) => (
                        <SheetRow key={i} index={i} row={row} city={cities[i]} />
                    ))}
                </tbody>
            </Grid>
            <RangeFrame $left={792} $w={530} $color="#2f6bcd" $open />
            <RangeFrame $left={735} $w={59} $color="#8459b8" />
            <RangeKnob $left={733} $color="#8459b8" />
            <RangeKnob $left={790} $color="#8459b8" />
            <RangeKnob $left={1318} $color="#2f6bcd" />
            <Chart />
            <ChartSide>
                <SideButton aria-label="图表元素">
                    <Svg w={32} color="#2fa04c"><path d="M0 16h32M16 0v32" /></Svg>
                </SideButton>
                <SideButton aria-label="图表样式">
                    <Svg w={34} sw={1.6}>
                        <path d="M14 19C20 10 27 4 32 1c2-.500 2 1 1 3-3 7-8 14-15 19z" fill="#fff" />
                        <path d="M1 27c5 0 4-5 8-8 4-2 9 1 7 6-2 6-11 8-15 2z" fill="#83beec" stroke="#0f6cbd" />
                    </Svg>
                </SideButton>
                <SideButton aria-label="图表筛选器">
                    <Svg w={34} color="#444" sw={1.8}>
                        <path d="M1 1h31v6L20 19v14h-6V19L1 7z" fill="#fafafa" />
                    </Svg>
                </SideButton>
            </ChartSide>
        </Canvas>
        <VScroll>
            <Svg w={14} h={10} color="none"><path d="M7 0l7 10H0z" fill="#616161" /></Svg>
            <VThumb />
            <Svg w={14} h={10} color="none"><path d="M0 0h14L7 10z" fill="#616161" /></Svg>
        </VScroll>
    </SheetArea>
);

const BottomTabs = () => (
    <SheetTabs>
        <TitleGroup $gap={0} $pad={16}>
            <NavArrow aria-label="上一个工作表"><Svg w={9} h={16} color="#9a9a9a" sw={1.8}><path d="M8 1L1 8l7 7" /></Svg></NavArrow>
            <NavArrow aria-label="下一个工作表"><Svg w={9} h={16} color="#9a9a9a" sw={1.8}><path d="M1 1l7 7-7 7" /></Svg></NavArrow>
        </TitleGroup>
        <SheetTab $active={false}>8月成交数据</SheetTab>
        <TabLine />
        <SheetTab $active><span>8月成交数据-2</span></SheetTab>
        <TabLine />
        <TitleGroup $gap={0} $pad={58}>
            <PlainButton aria-label="新工作表"><Svg w={17} sw={1.6}><path d="M0 8.500h17M8.500 0v17" /></Svg></PlainButton>
        </TitleGroup>
        <HScroll>
            <HThumb />
            <Svg w={10} h={14} color="none"><path d="M0 0l10 7-10 7z" fill="#616161" /></Svg>
        </HScroll>
    </SheetTabs>
);

const Status = () => (
    <StatusBar>
        <span>就绪</span>
        <PlainButton aria-label="录制宏">
            <Svg w={22} h={20} sw={1.8}>
                <path d="M9 19H1V1h19v6M1 5h19M4 9h4M4 12h3M4 15h3" />
                <circle cx="15" cy="13" r="5.5" /><circle cx="15" cy="13" r="2" fill="#444" />
            </Svg>
        </PlainButton>
        <PlainButton>
            <Svg w={22} sw={1.8}>
                <circle cx="9" cy="3.5" r="2.5" />
                <path d="M1 5c4 4 6 3 6 6 0 4-4 6-3 10 2 1 4-5 5-7M17 5c-4 3-5 3-5 7M11 13l10 9M21 13l-8 9" />
            </Svg>
            辅助功能: 调查
        </PlainButton>
        <StatusRight>
            <ViewButton $active aria-label="普通"><Svg w={20} color={ink} sw={1.8}><path d="M1 1h18v18H1zM7 1v18M13 1v18M1 7h18M1 13h18" /></Svg></ViewButton>
            <ViewButton aria-label="页面布局"><Svg w={21} color={ink} sw={1.8}><path d="M1 1h19v19H1zM5 4h11v13H5zM8 8h5M8 11h5M8 14h5" /></Svg></ViewButton>
            <ViewButton aria-label="分页预览"><Svg w={22} h={20} color={ink} sw={1.8}><path d="M1 1h20v18H1zM7 1v11M1 12h13M14 1v11" /></Svg></ViewButton>
            <TitleGroup $gap={0} $pad={8}>
                <Svg w={11} h={16} color={ink} sw={1.6}><path d="M0 8h11" /></Svg>
                <ZoomRange type="range" aria-label="缩放" defaultValue="45" />
                <Svg w={11} h={16} color={ink} sw={1.6}><path d="M0 8h11M5.500 2v12" /></Svg>
                <ZoomValue>90%</ZoomValue>
            </TitleGroup>
        </StatusRight>
    </StatusBar>
);

const FloatingToolbar = () => (
    <MiniToolbar>
        <MiniTool>
            <BucketIcon w={26} />
            <Caret />
            <ColorBar $color="#ed7d31" />
            <MiniLabel>填充</MiniLabel>
        </MiniTool>
        <MiniTool>
            <Svg w={34} h={26}>
                <path d="M23 2H2v23h9" />
                <path d="M12 24l3-9L28 2c4-1 6 2 4 5L19 20z" fill="#fff" stroke="#2b8fd0" />
                <path d="M12 24l3-8 4 4zM26 5l4 4" fill="#2b8fd0" stroke="#2b8fd0" />
            </Svg>
            <Caret />
            <ColorBar $color="#5b9bd5" />
            <MiniLabel>边框</MiniLabel>
        </MiniTool>
        <MiniSelect>
            <Select label="图表元素" value="图表区" $w={150} />
        </MiniSelect>
    </MiniToolbar>
);

const Menu = () => (
    <ContextMenu role="menu">
        <MenuSearch placeholder="搜索菜单" aria-label="搜索菜单" />
        {menu.map((item, i) => {
            if (item.sep) return <MenuLine key={i} />;
            if (item.heading) {
                return (
                    <div key={i}>
                        <MenuHeading>
                            {icons[item.icon]}
                            <span>{item.heading}</span>
                        </MenuHeading>
                        <PasteOption aria-label="粘贴"><PasteIcon w={32} h={35} /></PasteOption>
                    </div>
                );
            }
            return (
                <MenuItem key={i} role="menuitem" disabled={item.off} $hover={item.hover}>
                    {icons[item.icon] || <i />}
                    <span>{item.text}(<u>{item.k}</u>){item.dots && '...'}</span>
                    {item.split && <SplitLine />}
                    {item.sub && (
                        <SubArrow>
                            <Svg w={9} h={16} color={dim} sw={1.8}><path d="M1 1l7 7-7 7" /></Svg>
                        </SubArrow>
                    )}
                </MenuItem>
            );
        })}
    </ContextMenu>
);

const App = () => (
    <Window>
        <GlobalStyle />
        <Title />
        <Tabs />
        <Ribbon />
        <Formula />
        <Sheet />
        <BottomTabs />
        <Status />
        <FloatingToolbar />
        <Menu />
        <RedFrame />
        <Pointer>
            <Svg w={20} h={30} color="#000" sw={1.2}>
                <path d="M1 1v24l6-5 4 8 4-2-4-8h8z" fill="#fff" />
            </Svg>
        </Pointer>
        <Watermark>CSDN @毛媛媛</Watermark>
    </Window>
);

export default App;
